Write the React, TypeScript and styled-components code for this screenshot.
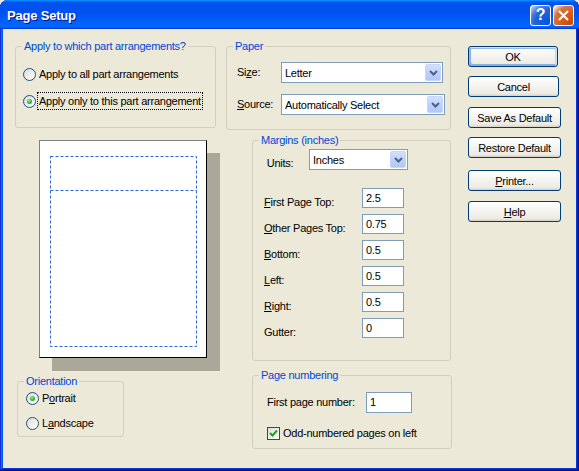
import React from "react";
import styled, { createGlobalStyle } from "styled-components";

const GlobalStyle = createGlobalStyle`
  html, body { margin: 0; padding: 0; background: #ECE9D8; }
  body {
    font-family: "Liberation Sans", Arial, sans-serif;
    font-size: 11px;
    letter-spacing: -0.25px;
    color: #000;
  }
  * { box-sizing: border-box; }
`;

const Window = styled.div`
  width: 579px;
  height: 471px;
  display: flex;
  flex-direction: column;
  background: #ece9d8;
  border-radius: 8px 8px 0 0;
  overflow: hidden;
  box-shadow: inset -1px -1px #00138c, inset 1px 1px #0831d9,
    inset -2px -2px #001ea0, inset 2px 2px #166aee, inset -3px -3px #003bda,
    inset 3px 3px #0855dd;
`;

const TitleBar = styled.div`
  height: 29px;
  flex: none;
  display: flex;
  align-items: center;
  padding: 1px 5px 0 7px;
  background: linear-gradient(
    180deg,
    #0997ff,
    #0053ee 8%,
    #0050ee 40%,
    #06f 88%,
    #06f 93%,
    #005bff 95%,
    #003dd7 96%,
    #003dd7
  );
`;

const Title = styled.div`
  flex: 1;
  color: #fff;
  font-weight: bold;
  font-size: 13px;
  letter-spacing: -0.2px;
  text-shadow: 1px 1px #0f1089;
`;

const CaptionButton = styled.div<{ $kind: "help" | "close" }>`
  width: 21px;
  height: 21px;
  margin-left: 2px;
  border: 1px solid #fff;
  border-radius: 3px;
  display: grid;
  place-items: center;
  color: #fff;
  font-weight: bold;
  font-size: 16px;
  line-height: 1;
  background: ${(p) =>
    p.$kind === "help"
      ? "radial-gradient(circle at 90% 90%, #0054e9 0%, #2263d5 55%, #4479e4 70%, #a3bbec 90%, #fff 100%)"
      : "radial-gradient(circle at 90% 90%, #cc4600 0%, #dc6527 55%, #cd7546 70%, #ffccb2 90%, #fff 100%)"};
`;

const Client = styled.div`
  flex: 1;
  margin: 0 3px 3px;
  display: flex;
  align-items: flex-start;
  padding: 11px 0 0 12px;
`;

const LeftCol = styled.div`
  width: 201px;
  display: flex;
  flex-direction: column;
  align-items: flex-start;
`;

const MidCol = styled.div`
  width: 226px;
  margin-left: 10px;
  display: flex;
  flex-direction: column;
  align-items: flex-start;
`;

const ButtonCol = styled.div`
  margin-left: 16px;
  padding-top: 6px;
  display: flex;
  flex-direction: column;
  align-items: flex-start;
`;

const Group = styled.fieldset<{ $w: number; $h: number; $ml?: number; $mt?: number }>`
  margin: ${(p) => p.$mt ?? 0}px 0 0 ${(p) => p.$ml ?? 0}px;
  padding: 0;
  min-width: 0;
  width: ${(p) => p.$w}px;
  height: ${(p) => p.$h}px;
  border: 1px solid #d0d0bf;
  border-radius: 3px;
`;

const Legend = styled.legend`
  margin-left: 6px;
  padding: 0 2px;
  color: #0046d5;
  font-size: 11px;
  line-height: 13px;
`;

const GroupBody = styled.div<{ $pt: number; $pl: number; $gap: number }>`
  display: flex;
  flex-direction: column;
  gap: ${(p) => p.$gap}px;
  padding: ${(p) => p.$pt}px 0 0 ${(p) => p.$pl}px;
`;

const OptionRow = styled.div`
  display: flex;
  align-items: center;
  height: 18px;
`;

const RadioCircle = styled.span<{ $checked?: boolean }>`
  width: 13px;
  height: 13px;
  flex: none;
  border-radius: 50%;
  border: 1px solid #1c5180;
  background: linear-gradient(135deg, #dcdcd7, #fff);
  display: grid;
  place-items: center;
  &::after {
    content: "";
    width: 5px;
    height: 5px;
    border-radius: 50%;
    background: ${(p) =>
      p.$checked
        ? "radial-gradient(circle at 40% 35%, #a8ec9e 0%, #3dbb37 45%, #1f9a1f 100%)"
        : "transparent"};
  }
`;

const CheckBox = styled.span`
  width: 13px;
  height: 13px;
  flex: none;
  border: 1px solid #1c5180;
  background: linear-gradient(135deg, #dcdcd7, #fff);
  display: grid;
  place-items: center;
`;

const OptionLabel = styled.span<{ $focus?: boolean }>`
  margin-left: 1px;
  padding: 0 1px;
  line-height: 16px;
  border: 1px dotted ${(p) => (p.$focus ? "#000" : "transparent")};
  white-space: nowrap;
`;

const U = styled.span`
  text-decoration: underline;
`;

const FieldRow = styled.div<{ $mt?: number }>`
  display: flex;
  align-items: flex-start;
  margin-top: ${(p) => p.$mt ?? 0}px;
`;

const FieldLabel = styled.span<{ $w: number; $h: number; $drop?: number }>`
  width: ${(p) => p.$w}px;
  height: ${(p) => p.$h}px;
  flex: none;
  line-height: ${(p) => p.$h}px;
  padding-top: ${(p) => p.$drop ?? 0}px;
  overflow: visible;
  white-space: nowrap;
`;

const Combo = styled.div<{ $w: number }>`
  width: ${(p) => p.$w}px;
  height: 21px;
  flex: none;
  border: 1px solid #7f9db9;
  background: #fff;
  display: flex;
  align-items: center;
  padding: 0 1px 0 3px;
`;

const ComboText = styled.span`
  flex: 1;
  white-space: nowrap;
`;

const ComboArrow = styled.span`
  width: 16px;
  height: 17px;
  border-radius: 2px;
  border: 1px solid #c5d5fc;
  background: linear-gradient(180deg, #d3e0fd 0%, #bccffa 60%, #b2c7f6 100%);
  display: grid;
  place-items: center;
`;

const TextBox = styled.div<{ $w: number; $h: number }>`
  width: ${(p) => p.$w}px;
  height: ${(p) => p.$h}px;
  flex: none;
  border: 1px solid #7f9db9;
  background: #fff;
  padding-left: 3px;
  line-height: ${(p) => p.$h - 2}px;
`;

const PageSheet = styled.div`
  margin: 12px 0 0 24px;
  width: 168px;
  height: 218px;
  background: #fff;
  border: 1px solid;
  border-color: #808080 #000 #000 #808080;
  box-shadow: 13px 13px 0 #aca899;
`;

const MarginDrawing = styled.svg`
  display: block;
`;

const Button = styled.div<{ $w: number; $mt: number; $default?: boolean }>`
  width: ${(p) => p.$w}px;
  height: 21px;
  margin-top: ${(p) => p.$mt}px;
  border: 1px solid #003c74;
  border-radius: 3px;
  background: linear-gradient(180deg, #fff, #ecebe5 86%, #d8d0c4);
  display: grid;
  place-items: center;
  white-space: nowrap;
  box-shadow: ${(p) =>
    p.$default
      ? "inset -1px 1px #cee7ff, inset 1px 2px #98b8ea, inset -2px 2px #bcd4f6, inset 1px -1px #89ade4, inset 2px -2px #89ade4"
      : "none"};
`;

const Chevron = () => (
  <svg width="9" height="6" viewBox="0 0 9 6">
    <path d="M1 1 L4.5 4.5 L8 1" fill="none" stroke="#4d6185" strokeWidth="2" />
  </svg>
);

const Select = ({ w, value }: { w: number; value: string }) => (
  <Combo $w={w}>
    <ComboText>{value}</ComboText>
    <ComboArrow>
      <Chevron />
    </ComboArrow>
  </Combo>
);

const margins: { label: React.ReactNode; value: string }[] = [
  { label: <><U>F</U>irst Page Top:</>, value: "2.5" },
  { label: <><U>O</U>ther Pages Top:</>, value: "0.75" },
  { label: <><U>B</U>ottom:</>, value: "0.5" },
  { label: <><U>L</U>eft:</>, value: "0.5" },
  { label: <><U>R</U>ight:</>, value: "0.5" },
  { label: <>Gutter:</>, value: "0" },
];

export default function App() {
  return (
    <>
      <GlobalStyle />
      <Window>
        <TitleBar>
          <Title>Page Setup</Title>
          <CaptionButton $kind="help">?</CaptionButton>
          <CaptionButton $kind="close">
            <svg width="13" height="13" viewBox="0 0 13 13">
              <path d="M2 2 L11 11 M11 2 L2 11" stroke="#fff" strokeWidth="2.2" />
            </svg>
          </CaptionButton>
        </TitleBar>
        <Client>
          <LeftCol>
            <Group $w={201} $h={88}>
              <Legend>Apply to which part arrangements?</Legend>
              <GroupBody $pt={12} $pl={7} $gap={9}>
                <OptionRow>
                  <RadioCircle />
                  <OptionLabel>Apply to all part arrangements</OptionLabel>
                </OptionRow>
                <OptionRow>
                  <RadioCircle $checked />
                  <OptionLabel $focus>Apply only to this part arrangement</OptionLabel>
                </OptionRow>
              </GroupBody>
            </Group>
            <PageSheet>
              <MarginDrawing width="166" height="216" viewBox="0 0 166 216">
                <rect
                  x="10.5"
                  y="15.5"
                  width="146"
                  height="190"
                  fill="none"
                  stroke="#2f66d4"
                  strokeDasharray="3 2"
                />
                <path d="M10.5 49.5 H156.5" stroke="#2f66d4" strokeDasharray="3 2" />
              </MarginDrawing>
            </PageSheet>
            <Group $w={107} $h={62} $ml={2} $mt={17}>
              <Legend>Orientation</Legend>
              <GroupBody $pt={1} $pl={8} $gap={7}>
                <OptionRow>
                  <RadioCircle $checked />
                  <OptionLabel>
                    P<U>o</U>rtrait
                  </OptionLabel>
                </OptionRow>
                <OptionRow>
                  <RadioCircle />
                  <OptionLabel>
                    L<U>a</U>ndscape
                  </OptionLabel>
                </OptionRow>
              </GroupBody>
            </Group>
          </LeftCol>

          <MidCol>
            <Group $w={225} $h={90}>
              <Legend>Paper</Legend>
              <GroupBody $pt={9} $pl={10} $gap={11}>
                <FieldRow>
                  <FieldLabel $w={44} $h={21}>
                    Si<U>z</U>e:
                  </FieldLabel>
                  <Select w={162} value="Letter" />
                </FieldRow>
                <FieldRow>
                  <FieldLabel $w={44} $h={21}>
                    <U>S</U>ource:
                  </FieldLabel>
                  <Select w={164} value="Automatically Select" />
                </FieldRow>
              </GroupBody>
            </Group>

            <Group $w={199} $h={227} $ml={26} $mt={4}>
              <Legend>Margins (inches)</Legend>
              <GroupBody $pt={2} $pl={11} $gap={6}>
                <FieldRow>
                  <FieldLabel $w={45} $h={21} $drop={4}>
                    &nbsp;Units:
                  </FieldLabel>
                  <Select w={99} value="Inches" />
                </FieldRow>
                {margins.map((m, i) => (
                  <FieldRow key={i} $mt={i === 0 ? 12 : 0}>
                    <FieldLabel $w={98} $h={20} $drop={4}>
                      {m.label}
                    </FieldLabel>
                    <TextBox $w={42} $h={20}>
                      {m.value}
                    </TextBox>
                  </FieldRow>
                ))}
              </GroupBody>
            </Group>

            <Group $w={200} $h={80} $ml={26} $mt={8}>
              <Legend>Page numbering</Legend>
              <GroupBody $pt={10} $pl={14} $gap={11}>
                <FieldRow>
                  <FieldLabel $w={99} $h={21}>
                    First page number:
                  </FieldLabel>
                  <TextBox $w={46} $h={21}>
                    1
                  </TextBox>
                </FieldRow>
                <OptionRow>
                  <CheckBox>
                    <svg width="9" height="9" viewBox="0 0 9 9">
                      <path
                        d="M1 4 L3.5 6.5 L8 1.5"
                        fill="none"
                        stroke="#21a121"
                        strokeWidth="2"
                      />
                    </svg>
                  </CheckBox>
                  <OptionLabel>Odd-numbered pages on left</OptionLabel>
                </OptionRow>
              </GroupBody>
            </Group>
          </MidCol>

          <ButtonCol>
            <Button $w={90} $mt={0} $default>
              OK
            </Button>
            <Button $w={91} $mt={9}>
              Cancel
            </Button>
            <Button $w={93} $mt={10}>
              Save As Default
            </Button>
            <Button $w={93} $mt={9}>
              Restore Default
            </Button>
            <Button $w={93} $mt={12}>
              <span>
                <U>P</U>rinter...
              </span>
            </Button>
            <Button $w={93} $mt={10}>
              <span>
                <U>H</U>elp
              </span>
            </Button>
          </ButtonCol>
        </Client>
      </Window>
    </>
  );
}
